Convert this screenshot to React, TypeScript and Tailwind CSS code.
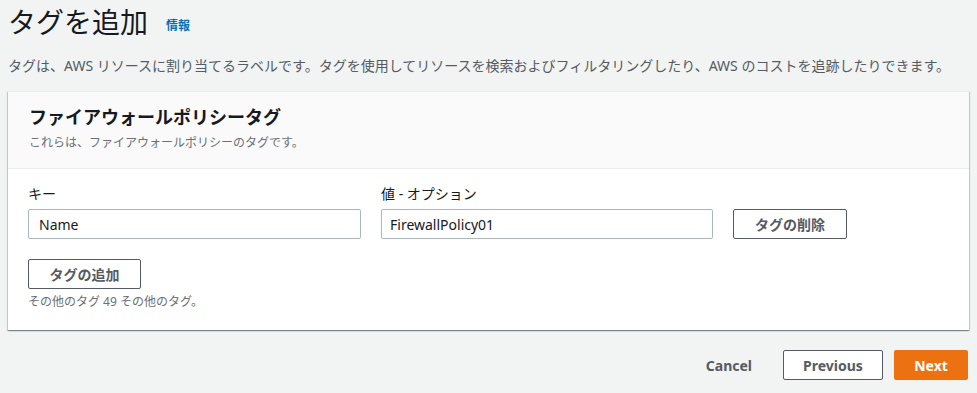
import React from 'react';

const font = { fontFamily: '"Noto Sans", "Noto Sans CJK JP", sans-serif' };

const App: React.FC = () => {
  return (
    <div
      className="min-h-[393px] w-full bg-[#f2f3f3] px-[8px] text-[#16191f] font-['Noto_Sans','Noto_Sans_CJK_JP',sans-serif]"
      style={font}
    >
      {/* Page header */}
      <div className="pt-[4px] flex items-end gap-[18px]">
        <h1 className="text-[28px] leading-[36px] font-normal text-[#16191f]">タグを追加</h1>
        <a className="text-[12px] leading-[16px] font-bold text-[#0073bb] mb-[6px]">情報</a>
      </div>
      <p className="mt-[16px] text-[14px] leading-[20px] text-[#545b64]">
        タグは、AWS リソースに割り当てるラベルです。タグを使用してリソースを検索およびフィルタリングしたり、AWS のコストを追跡したりできます。
      </p>

      {/* Card */}
      <div className="mt-[15px] bg-white border-t border-[#eaeded] shadow-[0_1px_1px_0_rgba(0,28,36,0.3),1px_1px_1px_0_rgba(0,28,36,0.15),-1px_1px_1px_0_rgba(0,28,36,0.15)]">
        <div className="bg-[#fafafa] border-b border-[#eaeded] px-[21px] pt-[14px] pb-[17px]">
          <h2 className="text-[18px] leading-[22px] font-bold text-[#16191f]">ファイアウォールポリシータグ</h2>
          <p className="mt-[7px] text-[12px] leading-[16px] text-[#687078]">これらは、ファイアウォールポリシーのタグです。</p>
        </div>
        <div className="px-[20px] pt-[15px] pb-[20px]">
          <div className="flex items-end gap-[20px]">
            <div className="w-[333px]">
              <label className="block text-[14px] leading-[20px] text-[#16191f]">キー</label>
              <input
                readOnly
                value="Name"
                className="mt-[5px] block w-full h-[30px] px-[10px] border border-[#aab7b8] rounded-[2px] bg-white text-[14px] text-[#16191f] outline-none"
              />
            </div>
            <div className="w-[332px]">
              <label className="block text-[14px] leading-[20px] text-[#16191f]">値 - オプション</label>
              <input
                readOnly
                value="FirewallPolicy01"
                className="mt-[5px] block w-full h-[30px] px-[8px] border border-[#aab7b8] rounded-[2px] bg-white text-[14px] text-[#16191f] outline-none"
              />
            </div>
            <button className="w-[114px] h-[30px] border border-[#545b64] rounded-[2px] bg-white text-[14px] font-bold text-[#545b64]">
              タグの削除
            </button>
          </div>
          <button className="mt-[20px] w-[113px] h-[30px] border border-[#545b64] rounded-[2px] bg-white text-[14px] font-bold text-[#545b64]">
            タグの追加
          </button>
          <p className="mt-[5px] text-[12px] leading-[16px] text-[#687078]">その他のタグ 49 その他のタグ。</p>
        </div>
      </div>

      {/* Footer actions */}
      <div className="mt-[20px] pr-[1px] flex justify-end items-center gap-[11px]">
        <button className="h-[30px] px-[20px] text-[14px] font-bold text-[#545b64]">Cancel</button>
        <button className="w-[100px] h-[30px] border border-[#545b64] rounded-[2px] bg-white text-[14px] font-bold text-[#545b64]">
          Previous
        </button>
        <button className="w-[74px] h-[30px] rounded-[2px] bg-[#ec7211] text-[14px] font-bold text-white">
          Next
        </button>
      </div>
    </div>
  );
};

export default App;
